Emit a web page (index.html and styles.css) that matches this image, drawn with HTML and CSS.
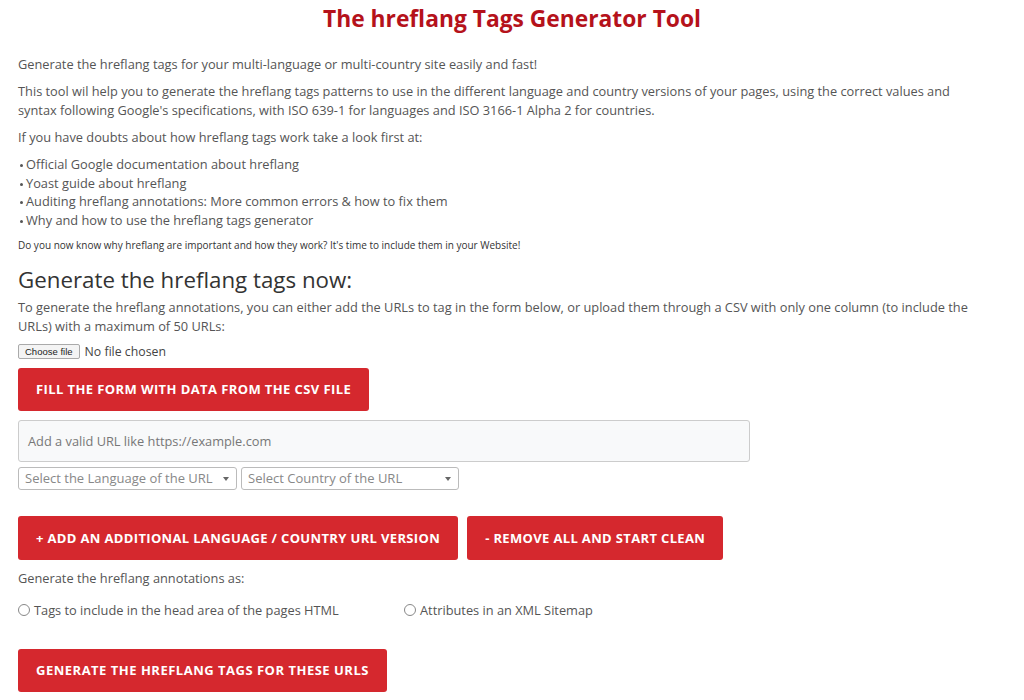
FILE: index.html
```html
<!DOCTYPE html>
<html>
<head>
<meta charset="utf-8">
<title>The hreflang Tags Generator Tool</title>
<link rel="stylesheet" href="styles.css">
</head>
<body>

<div class="wrap">

	<h1 class="title">The hreflang Tags Generator Tool</h1>

	<p>Generate the hreflang tags for your multi-language or multi-country site easily and fast!</p>

	<p>This tool wil help you to generate the hreflang tags patterns to use in the different language and country versions of your pages, using the correct values and syntax following Google's specifications, with ISO 639-1 for languages and ISO 3166-1 Alpha 2 for countries.</p>

	<p>If you have doubts about how hreflang tags work take a look first at:</p>

	<ul class="links">
		<li>Official Google documentation about hreflang</li>
		<li>Yoast guide about hreflang</li>
		<li>Auditing hreflang annotations: More common errors &amp; how to fix them</li>
		<li>Why and how to use the hreflang tags generator</li>
	</ul>

	<p class="small">Do you now know why hreflang are important and how they work? It's time to include them in your Website!</p>

	<h2>Generate the hreflang tags now:</h2>

	<p>To generate the hreflang annotations, you can either add the URLs to tag in the form below, or upload them through a CSV with only one column (to include the URLs) with a maximum of 50 URLs:</p>

	<div class="file-row">
		<span class="file-btn">Choose file</span>
		<span class="file-name">No file chosen</span>
	</div>

	<button class="red-btn">Fill the form with data from the CSV file</button>

	<div class="url-box">Add a valid URL like https://example.com</div>

	<div class="selects">
		<div class="select">Select the Language of the URL <span class="caret"></span></div>
		<div class="select">Select Country of the URL <span class="caret"></span></div>
	</div>

	<div class="btn-row">
		<button class="red-btn">+ Add an additional language / country URL version</button>
		<button class="red-btn">- Remove all and start clean</button>
	</div>

	<p class="as">Generate the hreflang annotations as:</p>

	<div class="radios">
		<label class="radio"><span class="dot"></span>Tags to include in the head area of the pages HTML</label>
		<label class="radio"><span class="dot"></span>Attributes in an XML Sitemap</label>
	</div>

	<button class="red-btn last">Generate the hreflang tags for these URLs</button>

</div>

</body>
</html>
```

FILE: styles.css
```css
body {
	margin: 0;
	background: #ffffff;
	font-family: "Open Sans", "DejaVu Sans", sans-serif;
	color: #555555;
}

.wrap {
	padding: 1px 18px 0 18px;
}

.title {
	margin: 0;
	padding-top: 3px;
	text-align: center;
	font-family: "Open Sans", sans-serif;
	font-size: 22.8px;
	font-weight: bold;
	color: #b5121b;
	line-height: 30px;
}

p {
	margin: 0 0 8px 0;
	max-width: 962px;
	font-size: 12.8px;
	line-height: 19px;
}

.title + p {
	margin-top: 21px;
}

.links {
	margin: 0 0 6px 0;
	padding-left: 8px;
	list-style: none;
}

.links li {
	font-size: 12.8px;
	line-height: 18.7px;
	position: relative;
}

.links li::before {
	content: "";
	position: absolute;
	left: -6px;
	top: 9px;
	width: 3px;
	height: 3px;
	border-radius: 50%;
	background: #555555;
}

p.small {
	font-size: 10px;
	color: #333333;
	margin-bottom: 11px;
}

h2 {
	margin: 0 0 4px 0;
	font-size: 22.3px;
	font-weight: normal;
	color: #333333;
	line-height: 28px;
}

.file-row {
	display: flex;
	align-items: center;
	gap: 5px;
	height: 16px;
	margin-top: 1px;
}

.file-btn {
	font-family: "Liberation Sans", sans-serif;
	font-size: 9.5px;
	color: #222222;
	border: 1px solid #aaaaaa;
	border-radius: 2px;
	background: #f4f4f4;
	padding: 1px 6px;
}

.file-name {
	font-size: 12.3px;
	color: #444444;
}

.red-btn {
	display: block;
	border: none;
	border-radius: 3px;
	background: #d5282e;
	color: #ffffff;
	font-family: "Open Sans", sans-serif;
	font-weight: bold;
	font-size: 13px;
	letter-spacing: 0.4px;
	text-transform: uppercase;
	padding: 0 18px;
	height: 43px;
	margin-top: 8px;
}

.url-box {
	margin-top: 9px;
	height: 42px;
	line-height: 40px;
	padding-left: 9px;
	box-sizing: border-box;
	width: 732px;
	border: 1px solid #cccccc;
	border-radius: 3px;
	background: #f8f9fa;
	color: #777777;
	font-size: 12.8px;
}

.selects {
	display: flex;
	gap: 4px;
	margin-top: 5px;
}

.select {
	position: relative;
	width: 219px;
	height: 23px;
	box-sizing: border-box;
	border: 1px solid #bbbbbb;
	border-radius: 3px;
	font-size: 13px;
	color: #888888;
	line-height: 21px;
	padding-left: 6px;
}

.select + .select {
	width: 218px;
}

.caret {
	position: absolute;
	right: 7px;
	top: 9px;
	border-left: 3px solid transparent;
	border-right: 3px solid transparent;
	border-top: 4px solid #666666;
}

.btn-row {
	display: flex;
	gap: 9px;
	margin-top: 26px;
}

.btn-row .red-btn {
	margin-top: 0;
	height: 44px;
	letter-spacing: 0.35px;
}

p.as {
	margin-top: 9px;
	margin-bottom: 13px;
}

.radios {
	display: flex;
}

.radio {
	display: flex;
	align-items: center;
	gap: 4px;
	font-size: 12.8px;
	width: 386px;
	height: 18px;
}

.dot {
	width: 10px;
	height: 10px;
	border: 1px solid #888888;
	border-radius: 50%;
}

.red-btn.last {
	margin-top: 30px;
	letter-spacing: 0.5px;
}
```
